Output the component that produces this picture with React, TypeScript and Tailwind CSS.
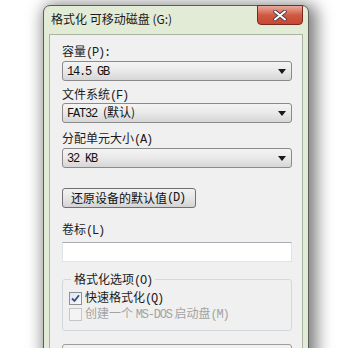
import { ReactNode } from 'react';

const cjk = "font-['Noto_Sans_CJK_SC','Noto_Sans',sans-serif]";

// half-width ASCII, like SimSun's latin glyphs
function M({ children }: { children: ReactNode }) {
  return <span className="font-['Liberation_Mono',monospace] text-[12px] tracking-[-1.2px]">{children}</span>;
}

function Label({ children, className = '' }: { children: ReactNode; className?: string }) {
  return <div className={`h-[16px] leading-[16px] text-[12px] text-[#1b1b1b] ${className}`}>{children}</div>;
}

function Combo({ value, className = '' }: { value: ReactNode; className?: string }) {
  return (
    <div className={`flex h-[20px] w-[230px] items-center justify-between rounded-[3px] border border-[#8a8a8a] bg-gradient-to-b from-[#f4f4f4] via-[#e9e9e9] to-[#d6d6d6] pl-[4px] pr-[5px] text-[12px] text-[#111] ${className}`}>
      <span className="leading-[16px]">{value}</span>
      <svg width="8" height="5" viewBox="0 0 8 5">
        <path d="M0 0 H8 L4 5 Z" fill="#1a1a1a" />
      </svg>
    </div>
  );
}

export default function App() {
  return (
    <div className={`relative h-[348px] w-[345px] overflow-hidden bg-white pl-[43px] pt-[5px] ${cjk}`}>
      {/* window */}
      <div className="h-[400px] w-[266px] rounded-t-[7px] border border-[#5c5c5c] bg-[#e2ebd6] shadow-[4px_3px_16px_4px_rgba(0,0,0,0.5)]">
        {/* title bar */}
        <div className="flex h-[28px] items-start justify-between">
          <div className="pl-[7px] pt-[5px] text-[12px] leading-[15px] text-[#1a1a1a]">
            格式化 可移动磁盘 (G:)
          </div>
          <div className="mr-[5px] -mt-px flex h-[20px] w-[46px] items-center justify-center rounded-b-[4px] border border-[#7a2a1e] bg-gradient-to-b from-[#e8ab9c] via-[#cf5a43] to-[#c9472f]">
            <svg width="14" height="11" viewBox="0 0 14 11">
              <path d="M2 1.5 L12 9.5 M12 1.5 L2 9.5" stroke="#4a3b4a" strokeWidth="3.6" strokeLinecap="round" />
              <path d="M2 1.5 L12 9.5 M12 1.5 L2 9.5" stroke="#ffffff" strokeWidth="2" strokeLinecap="round" />
            </svg>
          </div>
        </div>

        {/* client area */}
        <div className="ml-[5px] h-[360px] w-[254px] border border-[#a9b5a2] bg-[#f0f0f0] pl-[12px]">
          <Label className="mt-[8px]">容量<M>(P):</M></Label>
          <Combo className="mt-[2px]" value={<M>14.5 GB</M>} />

          <Label className="mt-[5px]">文件系统<M>(F)</M></Label>
          <Combo className="mt-[1px]" value={<><M>FAT32 </M>(默认)</>} />

          <Label className="mt-[7px]">分配单元大小<M>(A)</M></Label>
          <Combo className="mt-[2px]" value={<M>32 KB</M>} />

          <div className="mt-[20px] flex h-[20px] w-[134px] items-center rounded-[3px] border border-[#707070] bg-gradient-to-b from-[#f3f3f3] via-[#e6e6e6] to-[#d3d3d3] pl-[8px] text-[12px] leading-[16px] text-[#111]">
            还原设备的默认值<M>(D)</M>
          </div>

          <Label className="mt-[13px]">卷标<M>(L)</M></Label>
          <div className="mt-[5px] h-[20px] w-[230px] border border-[#dfe3e8] border-t-[#abadb3] bg-white" />

          <fieldset className="mt-[9px] w-[230px] rounded-[3px] border border-[#d2d9de] pb-[8px] pl-[6px] pt-[3px]">
            <legend className="ml-[2px] h-[16px] px-[3px] text-[12px] leading-[16px] text-[#1b1b1b]">
              格式化选项<M>(O)</M>
            </legend>
            <div className="flex h-[16px] items-center gap-[3px] text-[12px] leading-[16px] text-[#1b1b1b]">
              <span className="flex h-[13px] w-[13px] items-center justify-center border border-[#8e8f8f] bg-gradient-to-br from-[#dfe8f4] to-[#f6f9fc]">
                <svg width="9" height="9" viewBox="0 0 9 9">
                  <path d="M1 4.5 L3.5 7 L8 1.2" stroke="#3c4f74" strokeWidth="1.8" fill="none" />
                </svg>
              </span>
              <span>快速格式化<M>(Q)</M></span>
            </div>
            <div className="flex h-[16px] items-center gap-[3px] text-[12px] leading-[16px] text-[#a3a3a3]">
              <span className="h-[13px] w-[13px] border border-[#c6c6c6] bg-[#f4f4f4]" />
              <span>创建一个 <M>MS-DOS</M> 启动盘<M>(M)</M></span>
            </div>
          </fieldset>

          <div className="mt-[13px] h-[30px] w-[230px] rounded-[3px] border border-[#9c9c9c] bg-gradient-to-b from-[#f3f3f3] to-[#dcdcdc]" />
        </div>
      </div>
    </div>
  );
}
